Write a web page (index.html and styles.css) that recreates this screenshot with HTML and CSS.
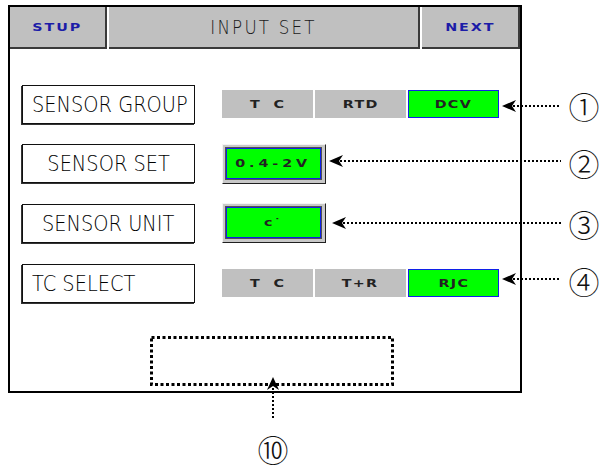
FILE: index.html
```html
<!DOCTYPE html>
<html lang="en">
<head>
    <meta charset="UTF-8">
    <title>Input Set</title>
    <link rel="stylesheet" href="styles.css">
</head>
<body>
    <div class="screen">
        <div class="topbar">
            <div class="tb-btn"><span class="px blue">STUP</span></div>
            <div class="tb-title"><span class="thin">INPUT SET</span></div>
            <div class="tb-btn"><span class="px blue">NEXT</span></div>
        </div>

        <div class="rows">
            <div class="row">
                <div class="label left"><span class="thin">SENSOR GROUP</span></div>
                <div class="seg">
                    <div class="seg-item"><span class="px">T&nbsp;&nbsp;C</span></div>
                    <div class="seg-item"><span class="px">RTD</span></div>
                    <div class="seg-item on"><span class="px">DCV</span></div>
                </div>
            </div>
            <div class="row">
                <div class="label"><span class="thin">SENSOR SET</span></div>
                <div class="btn"><div class="btn-face"><span class="px wide">0.4-2V</span></div></div>
            </div>
            <div class="row">
                <div class="label"><span class="thin">SENSOR UNIT</span></div>
                <div class="btn"><div class="btn-face"><span class="px">c&#729;</span></div></div>
            </div>
            <div class="row">
                <div class="label left"><span class="thin">TC SELECT</span></div>
                <div class="seg">
                    <div class="seg-item"><span class="px">T&nbsp;&nbsp;C</span></div>
                    <div class="seg-item"><span class="px">T+R</span></div>
                    <div class="seg-item on"><span class="px">RJC</span></div>
                </div>
            </div>
        </div>
    </div>

    <!-- callout marks drawn over the screen -->
    <svg class="notes" width="601" height="469" viewBox="0 0 601 469">
        <g fill="#000">
            <path d="M502 106 L516 100 L512 106 L516 112 Z"/>
            <path d="M329 161 L343 155 L339 161 L343 167 Z"/>
            <path d="M332 223 L346 217 L342 223 L346 229 Z"/>
            <path d="M502 279 L516 273 L512 279 L516 285 Z"/>
            <path d="M273 377 L267 390 L273 386 L279 390 Z"/>
        </g>
        <g stroke="#000" stroke-width="2" stroke-dasharray="2 2" fill="none">
            <line x1="513" y1="106" x2="561" y2="106"/>
            <line x1="340" y1="161" x2="561" y2="161"/>
            <line x1="343" y1="223" x2="561" y2="223"/>
            <line x1="513" y1="279" x2="561" y2="279"/>
            <line x1="273" y1="388" x2="273" y2="418"/>
        </g>
        <rect x="151.5" y="337.5" width="241" height="47" fill="none" stroke="#000" stroke-width="3" stroke-dasharray="3 2.5"/>
    </svg>
    <span class="num n1">&#9312;</span>
    <span class="num n2">&#9313;</span>
    <span class="num n3">&#9314;</span>
    <span class="num n4">&#9315;</span>
    <span class="num n10">&#9321;</span>
</body>
</html>
```
FILE: styles.css
```css
body {
    margin: 0;
    background: #fff;
    font-family: "DejaVu Sans", sans-serif;
    position: relative;
    width: 601px;
    height: 469px;
}

.screen {
    margin: 5px 0 0 8px;
    width: 514px;
    height: 388px;
    border: 2px solid #000;
    box-sizing: border-box;
}

.topbar {
    display: flex;
    gap: 2px;
    height: 42px;
}

.tb-btn,
.tb-title {
    background-color: #c0c0c0;
    border-right: 2px solid #3a3a3a;
    border-bottom: 2px solid #3a3a3a;
    box-sizing: border-box;
    display: flex;
    align-items: center;
    justify-content: center;
}

.tb-btn {
    width: 97px;
}

.tb-btn:last-child {
    width: 98px;
}

.tb-title {
    flex: 1;
    font-size: 19px;
    letter-spacing: 2.5px;
    color: #1a1a1a;
}

/* thin, narrow lettering of the panel */
.thin {
    display: inline-block;
    white-space: nowrap;
    font-family: "DejaVu Sans", sans-serif;
    font-weight: 200;
    transform: scaleX(0.88);
}

.px {
    display: inline-block;
    white-space: nowrap;
    font-family: "DejaVu Sans", sans-serif;
    font-weight: bold;
    font-size: 11px;
    letter-spacing: 1px;
    color: #222;
    transform: scaleX(1.3);
}

.px.blue {
    color: #1c1ca8;
    letter-spacing: 1.5px;
}

.px.wide {
    letter-spacing: 3px;
}

.rows {
    padding: 35px 0 0 12px;
    display: flex;
    flex-direction: column;
    gap: 19.7px;
}

.row {
    display: flex;
    align-items: center;
    gap: 27px;
    height: 40px;
}

.label {
    flex-shrink: 0;
    width: 173px;
    height: 39px;
    box-sizing: border-box;
    border: 1px solid #111;
    box-shadow: -1px 1px 0 #333;
    display: flex;
    align-items: center;
    justify-content: center;
    font-size: 22px;
    color: #000;
}

.label.left {
    justify-content: flex-start;
    padding-left: 9px;
}

.label.left .thin {
    transform-origin: left center;
}

.seg {
    display: flex;
    gap: 2px;
}

.seg-item {
    width: 91px;
    height: 28px;
    box-sizing: border-box;
    background-color: #c0c0c0;
    display: flex;
    align-items: center;
    justify-content: center;
}

.seg-item.on {
    background-color: #00ff00;
    border: 1.5px solid #1020e8;
}

.btn {
    width: 104px;
    height: 40px;
    box-sizing: border-box;
    background-color: #c8c8c8;
    border: 1px solid;
    border-color: #f4f4f4 #202020 #202020 #f4f4f4;
    padding: 3px 4px 4px 3px;
}

.btn-face {
    height: 100%;
    box-sizing: border-box;
    background-color: #00ff00;
    border: 1.5px solid #1020e8;
    box-shadow: 0 0 0 1px #505050;
    display: flex;
    align-items: center;
    justify-content: center;
}

.notes {
    position: absolute;
    top: 0;
    left: 0;
}

.num {
    position: absolute;
    width: 34px;
    height: 34px;
    display: flex;
    align-items: center;
    justify-content: center;
    font-family: "Noto Sans CJK KR", sans-serif;
    font-size: 31px;
    font-weight: 300;
    line-height: 1;
    color: #111;
}

.n1 { left: 567px; top: 88px; }
.n2 { left: 567px; top: 145px; }
.n3 { left: 567px; top: 206px; }
.n4 { left: 567px; top: 263px; }
.n10 { left: 256px; top: 431px; }
```
